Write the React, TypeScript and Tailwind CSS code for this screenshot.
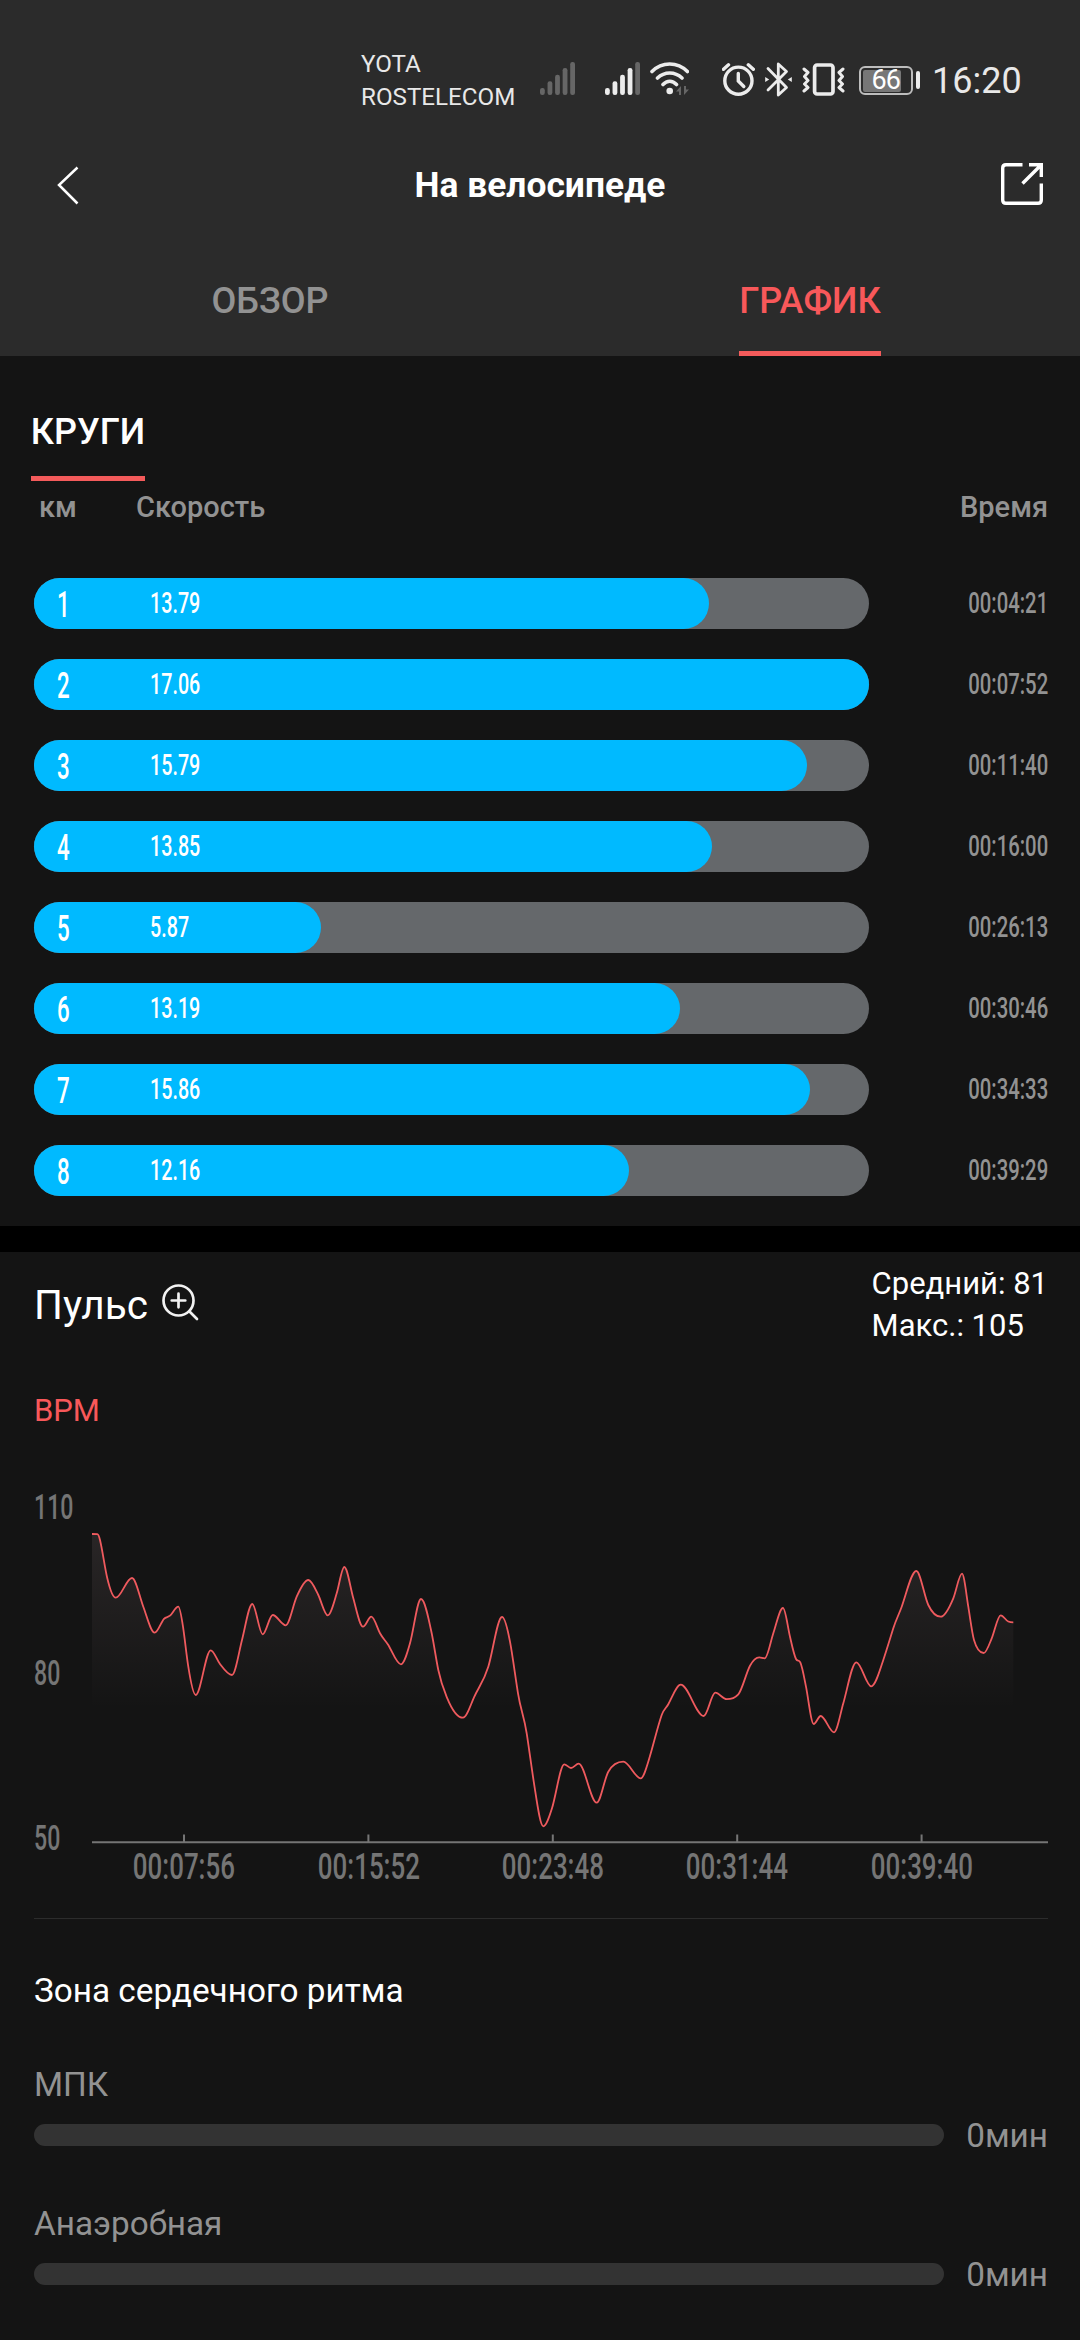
import { clsx } from 'clsx'
import type { ReactNode } from 'react'

const laps = [
  { km: 1, speed: 13.79, time: '00:04:21' },
  { km: 2, speed: 17.06, time: '00:07:52' },
  { km: 3, speed: 15.79, time: '00:11:40' },
  { km: 4, speed: 13.85, time: '00:16:00' },
  { km: 5, speed: 5.87, time: '00:26:13' },
  { km: 6, speed: 13.19, time: '00:30:46' },
  { km: 7, speed: 15.86, time: '00:34:33' },
  { km: 8, speed: 12.16, time: '00:39:29' },
]
const maxSpeed = Math.max(...laps.map(l => l.speed))

const bpmLabels = ['110', '80', '50']
const timeLabels = ['00:07:56', '00:15:52', '00:23:48', '00:31:44', '00:39:40']
const zones = [
  { name: 'МПК', value: '0мин' },
  { name: 'Анаэробная', value: '0мин' },
]

// pulse curve, in chart pixels
const pulse: [number, number][] = [
  [0, 47], [5.3, 47.2], [8, 53], [15.3, 91.3], [23.7, 110.7], [40, 91], [51.3, 119.7], [62.7, 145.7], [72, 131.8],
  [78, 128.7], [86.3, 119.7], [91, 139.7], [96.3, 179.7], [103.7, 208], [118.7, 163.3], [128, 177], [140, 188],
  [150, 153], [160.3, 117], [170.7, 147.3], [180.7, 128], [193.7, 138.3], [204.7, 109.7], [216.3, 93], [226.3, 108],
  [235.7, 128.3], [244.7, 106.3], [252.3, 80], [261.3, 111.3], [271, 139.7], [279.3, 129.7], [288, 146.3],
  [296.3, 158], [309, 177.3], [318, 156.3], [329, 112], [339.7, 146.3], [346.3, 183], [355.3, 211.3], [371, 230.7],
  [382, 210.3], [396.3, 179.7], [410, 130], [418, 154.7], [426, 206.3], [434.7, 246.3], [442, 296.3], [451.3, 339.3],
  [460, 321.3], [472.3, 277.3], [479, 281], [486.7, 276.7], [504.7, 315.7], [516.3, 284.7], [531.3, 274.7],
  [548.7, 291.3], [557.3, 271.3], [569.7, 228], [576.3, 217.3], [588.7, 197.7], [611.7, 229], [623.3, 205.7],
  [634.7, 212.2], [646.3, 207.3], [658, 178.7], [667.3, 170.3], [672.7, 171.3], [681.3, 146.3], [691, 121],
  [698, 149.7], [704, 172], [708.3, 175.3], [714, 199.7], [721.7, 237], [728.7, 229], [742, 245.3], [751.3, 216.3],
  [764.3, 175.3], [779.3, 199.3], [791.3, 173], [801.3, 141.3], [809.7, 119.7], [824.3, 84], [836.3, 118],
  [848.7, 129.7], [861.3, 111.3], [870, 86.7], [876.3, 119.7], [882, 153], [891.7, 166], [899.7, 151.3],
  [908.7, 128.3], [916.3, 134.5], [921.3, 135.3],
]

// monotone cubic: flat at every peak and dip, never overshoots
function smoothPath(pts: [number, number][]) {
  const slope = (i: number) => (pts[i + 1][1] - pts[i][1]) / (pts[i + 1][0] - pts[i][0])
  const tangent = pts.map((_, i) => {
    if (i === 0 || i === pts.length - 1) return 0
    const a = slope(i - 1)
    const b = slope(i)
    if (a * b <= 0) return 0
    return Math.sign(a) * Math.min(Math.abs(a + b) / 1.8, 2.6 * Math.abs(a), 2.6 * Math.abs(b))
  })
  let d = `M${pts[0][0]} ${pts[0][1]}`
  for (let i = 1; i < pts.length; i++) {
    const [x0, y0] = pts[i - 1]
    const [x1, y1] = pts[i]
    const h = (x1 - x0) / 3
    d += `C${x0 + h} ${y0 + tangent[i - 1] * h} ${x1 - h} ${y1 - tangent[i] * h} ${x1} ${y1}`
  }
  return d
}

// narrow numerals
function Num({ children, className }: { children: ReactNode; className?: string }) {
  return <span className={clsx('inline-block font-medium whitespace-nowrap', className)}>{children}</span>
}

function Signal({ level }: { level: number }) {
  const tops = [26, 19.3, 12.7, 6, 0]
  return (
    <svg width="35" height="36" viewBox="0 0 35 36">
      {tops.map((y, i) => (
        <rect key={y} x={i * 7.55} y={y} width="4.8" height={33 - y} rx="2.2" fill={i < level ? '#ececec' : '#666'} />
      ))}
    </svg>
  )
}

function StatusBar() {
  return (
    <div className="flex h-[160px] items-center pl-[361px] text-[#e8e8e8]">
      <div className="w-[179px] pt-[2px] text-[24.2px] leading-[33px]">
        <div>YOTA</div>
        <div>ROSTELECOM</div>
      </div>
      <Signal level={0} />
      <div className="ml-[30px] flex"><Signal level={4} /></div>
      <svg className="ml-[10px]" width="39" height="36" viewBox="0 0 39 36" fill="none" stroke="#ececec" strokeWidth="3.6" strokeLinecap="round">
        <path d="M2 9.5C12-.5 27.4-.5 37.4 9.5M7.5 16C14.5 9.3 25 9.3 32 16M13 22.5C17 18.2 22.5 18.2 26.5 22.5" />
        <circle cx="19.7" cy="29" r="3.3" fill="#ececec" stroke="none" />
        <path d="M26 29.5L31 24v9h-2v-3.5zM34 24v9l5-5.5h-3V24z" fill="#666" stroke="none" />
      </svg>
      <svg className="ml-[33px]" width="33" height="36" viewBox="0 0 33 36" fill="none" stroke="#ececec" strokeWidth="3.4" strokeLinecap="round">
        <circle cx="16.4" cy="18.7" r="13.6" />
        <path d="M1.5 7.3L6.5 2.8M26.3 2.8l5 4.5" />
        <path d="M16.3 11.5V19l5.5 5.5" />
      </svg>
      <svg className="ml-[10px]" width="27" height="36" viewBox="0 0 27 36" fill="none" stroke="#ececec" strokeWidth="2.8" strokeLinecap="round" strokeLinejoin="round">
        <path d="M3 6.5L21.5 25.5 13.3 33V2l8.2 7.5L3 28" />
        <path d="M.2 15l4 2.5-4 2.5zM26.8 15l-4 2.5 4 2.5z" fill="#ececec" stroke="none" />
      </svg>
      <svg className="ml-[10px]" width="43" height="36" viewBox="0 0 43 36" fill="none" stroke="#ececec" strokeWidth="3" strokeLinecap="round" strokeLinejoin="round">
        <rect x="12.6" y="3" width="18.4" height="29" rx="2.5" strokeWidth="3.7" />
        <path d="M2 7l4 3.5-3.5 4L6 18.5 2.5 22 6 25.5 2 29M41 7l-4 3.5 3.5 4-3.5 4 3.5 3.5-3.5 3.5 4 3.5" />
      </svg>
      <div className="mt-px ml-[14px] flex h-[29px] w-[54px] items-center rounded-[6px] border-2 border-[#bdbdbd] pl-[1.5px]">
        <div className="flex h-[22px] w-[38px] items-center rounded-[2px] bg-[#777] pl-[9px] text-[27px] tracking-[-1px] text-white">
          66
        </div>
      </div>
      <div className="ml-[3px] h-[18px] w-[4px] rounded-[2px] bg-[#ececec]" />
      <span className="ml-[12px] pt-[2px] text-[36px] leading-none">16:20</span>
    </div>
  )
}

function Header() {
  return (
    <header className="h-[356px] bg-[#2b2b2b]">
      <StatusBar />
      <div className="flex h-[52px] items-center justify-between pr-[37px] pl-[57px]">
        <svg width="22" height="40" viewBox="0 0 22 40" fill="none" stroke="#fff" strokeWidth="2.5">
          <path d="M20.5 1.5L2 19l18.5 18.5" />
        </svg>
        <h1 className="text-[35.4px] font-bold text-white">На велосипеде</h1>
        <svg className="mb-[4px]" width="42" height="42" viewBox="0 0 42 42" fill="none" stroke="#fff" strokeWidth="3.4">
          <path d="M21.5 1.7H5Q1.7 1.7 1.7 5V37Q1.7 40.3 5 40.3H37Q40.3 40.3 40.3 37V20.5" />
          <path d="M28 1.7H40.3V14M39.8 2.2L21.5 20.5" />
        </svg>
      </div>
      <nav className="grid h-[144px] grid-cols-2 items-end justify-items-center text-[36px] font-medium">
        <span className="border-b-[5px] border-transparent leading-[100px] text-[#929292]">ОБЗОР</span>
        <span className="border-b-[5px] border-[#f45b5b] leading-[100px] text-[#f8585a]">ГРАФИК</span>
      </nav>
    </header>
  )
}

function Laps() {
  return (
    <section className="pt-[32px] pb-[30px]">
      <h2 className="ml-[31px] flex w-[114px] justify-center border-b-[5px] border-[#f45b5b] text-[36px] leading-[88px] font-medium text-white">
        КРУГИ
      </h2>
      <div className="flex h-[51px] items-center pt-[2px] pr-[32px] pl-[39px] text-[29px] font-medium text-[#929292]">
        <span className="w-[97px]">км</span>
        <span>Скорость</span>
        <span className="ml-auto">Время</span>
      </div>
      <ul className="mt-[46px] flex flex-col gap-[30px] pr-[32px] pl-[34px]">
        {laps.map(lap => (
          <li key={lap.km} className="flex items-center justify-between">
            <div className="h-[51px] w-[835px] rounded-full bg-[#65686b]">
              <div
                className="flex h-full items-center rounded-full bg-[#00baff] pl-[23px] text-white"
                style={{ width: `${(lap.speed / maxSpeed) * 100}%` }}
              >
                <Num className="w-[93px] origin-left scale-x-[0.62] pt-[2px] text-[36px]">{lap.km}</Num>
                <Num className="origin-left scale-x-[0.68] pt-px text-[29px]">{lap.speed.toFixed(2)}</Num>
              </div>
            </div>
            <Num className="origin-right scale-x-[0.7] pt-px text-[29px] text-[#929292]">{lap.time}</Num>
          </li>
        ))}
      </ul>
    </section>
  )
}

function PulseChart() {
  const line = smoothPath(pulse)
  return (
    <div className="flex pt-[23px] pr-[32px] pl-[34px] text-[#757575]">
      <div className="flex h-[372px] w-[58px] flex-col justify-between pt-px text-[35px] leading-[40px]">
        {bpmLabels.map(l => <Num key={l} className="origin-left scale-x-[0.66]">{l}</Num>)}
      </div>
      <div className="w-[956px]">
        <svg width="956" height="360" viewBox="0 0 956 360" fill="none">
          <defs>
            <linearGradient id="fade" gradientUnits="userSpaceOnUse" x1="0" y1="47" x2="0" y2="222">
              <stop offset="0" stopColor="#ffd6dc" stopOpacity="0.09" />
              <stop offset="1" stopColor="#ffd6dc" stopOpacity="0" />
            </linearGradient>
          </defs>
          <path d={`${line}V355H0Z`} fill="url(#fade)" />
          <path d={line} stroke="#ef5a5e" strokeWidth="1.8" />
          <path d="M0 355.300H956" stroke="#757575" strokeWidth="2" />
          {timeLabels.map((l, i) => (
            <path key={l} d={`M${92 + i * 184.4} 347.500V355`} stroke="#757575" strokeWidth="2" />
          ))}
        </svg>
        <div className="flex text-[36px] leading-[40px]">
          {timeLabels.map(l => (
            <div key={l} className="flex w-[184.4px] justify-center">
              <Num className="scale-x-[0.72]">{l}</Num>
            </div>
          ))}
        </div>
      </div>
    </div>
  )
}

function Pulse() {
  return (
    <section>
      <div className="flex h-[106px] items-center pr-[32px] pl-[34px] text-white">
        <h2 className="pt-px text-[40.5px]">Пульс</h2>
        <svg className="mb-[6px] ml-[14px]" width="37" height="37" viewBox="0 0 37 37" fill="none" stroke="#f2f2f2" strokeWidth="2.7" strokeLinecap="round">
          <circle cx="16.5" cy="16.5" r="15" />
          <path d="M27.5 27.5l7.5 7.5M9.7 16.5h13.6M16.5 9.7v13.6" />
        </svg>
        <div className="ml-auto text-[31px] leading-[42px]">
          <p>Средний: 81</p>
          <p>Макс.: 105</p>
        </div>
      </div>
      <div className="pl-[34px] text-[31px] leading-[106px] text-[#f8585a]">BPM</div>
      <PulseChart />
    </section>
  )
}

function HeartZones() {
  return (
    <section className="mt-[31px]">
      <div className="mr-[32px] ml-[34px] h-px bg-[#2c2c2c]" />
      <h3 className="pl-[34px] text-[33.3px] leading-[144px] text-white">Зона сердечного ритма</h3>
      <ul className="flex flex-col gap-[38px] pr-[32px] pl-[34px] text-[33.3px] text-[#929292]">
        {zones.map(z => (
          <li key={z.name}>
            <div className="leading-[43px]">{z.name}</div>
            <div className="flex h-[58px] items-center justify-between">
              <div className="h-[22px] w-[910px] rounded-full bg-[#333]" />
              <span className="pt-[2px]">{z.value}</span>
            </div>
          </li>
        ))}
      </ul>
    </section>
  )
}

export default function App() {
  return (
    <div className="h-[2340px] w-[1080px] overflow-hidden bg-[#141414] font-[Roboto,sans-serif]">
      <Header />
      <Laps />
      <div className="h-[26px] bg-black" />
      <Pulse />
      <HeartZones />
    </div>
  )
}
